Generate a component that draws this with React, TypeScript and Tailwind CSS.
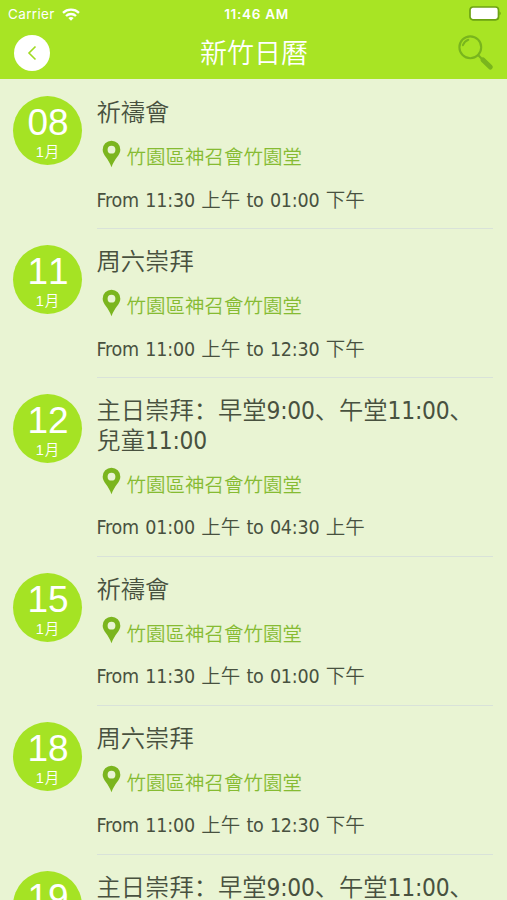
import React from "react"

const __TAILWIND_CSS = {
    cjk: "font-['Noto_Sans_CJK_TC',sans-serif]",
    // full width punctuation sits at the lower left of its box
    punctuation: "font-['Noto_Sans_CJK_SC',sans-serif]",
    latin: "font-['DejaVu_Sans_Condensed','DejaVu_Sans',sans-serif] font-stretch-condensed font-normal tracking-[-0.01em]",
}

interface CalendarEvent {
    day: string
    title: string[]
    from: string
    to: string
}

const EVENTS: CalendarEvent[] = [
    { day: '08', title: ['祈禱會'], from: '11:30 上午', to: '01:00 下午' },
    { day: '11', title: ['周六崇拜'], from: '11:00 上午', to: '12:30 下午' },
    { day: '12', title: ['主日崇拜：早堂9:00、午堂11:00、', '兒童11:00'], from: '01:00 上午', to: '04:30 上午' },
    { day: '15', title: ['祈禱會'], from: '11:30 上午', to: '01:00 下午' },
    { day: '18', title: ['周六崇拜'], from: '11:00 上午', to: '12:30 下午' },
    { day: '19', title: ['主日崇拜：早堂9:00、午堂11:00、', '兒童11:00'], from: '01:00 上午', to: '04:30 上午' },
]

// Latin runs and punctuation use different families from the Chinese ones
const MixedText = ({ text }: { text: string }) => {
    return <>
        {text.split(/([\x20-\x7e]+|[：、])/).map((part, i) => {
            if (i % 2 === 0) return part
            const mode = /[：、]/.test(part) ? __TAILWIND_CSS.punctuation : __TAILWIND_CSS.latin
            return <span key={i} lang={mode === __TAILWIND_CSS.punctuation ? 'zh-Hans' : 'en'} className={mode}>{part}</span>
        })}
    </>
}

const WifiIcon = () => (
    <svg className="ml-[7px] h-[13px] w-[18px]" viewBox="0 0 18 13" fill="none" stroke="white" strokeWidth="2.3">
        <path d="M1 4.8C5.5.6 12.5.6 17 4.8" />
        <path d="M4 8C6.8 5.3 11.2 5.3 14 8" />
        <path d="M9 12.7L6.3 10Q9 7.8 11.7 10Z" fill="white" stroke="none" />
    </svg>
)

const BatteryIcon = () => (
    <svg className="mb-[2px] h-[15px] w-[33px]" viewBox="0 0 33 15">
        <rect x="1" y="1" width="28.5" height="12.8" rx="3" fill="white" stroke="#6ca313" strokeWidth="1.7" />
        <path d="M30.5 5.2Q33 7.4 30.5 9.6Z" fill="#6ca313" />
    </svg>
)

const SearchIcon = () => (
    <svg className="h-9 w-9" viewBox="0 0 36 36" fill="none" stroke="#79b51d" strokeLinecap="round">
        <circle cx="12.3" cy="12.3" r="10.9" strokeWidth="2.1" />
        <path d="M4.9 10.2Q6.5 6.2 10.3 4.8" strokeWidth="2" />
        <path d="M20.3 20.3L24.5 24.5" strokeWidth="2.2" />
        <path d="M25 25L32.3 32" strokeWidth="5" />
    </svg>
)

const PinIcon = () => (
    <svg className="mt-px h-7 w-[19px] shrink-0" viewBox="0 0 20 28">
        <path fillRule="evenodd" fill="#7bb51e" d="M10 0A9.3 9.3 0 0 0 .7 9.4C.7 15.2 7 18.5 10 28C13 18.5 19.3 15.2 19.3 9.4A9.3 9.3 0 0 0 10 0ZM10 5.4A4.1 4.1 0 1 1 10 13.6A4.1 4.1 0 1 1 10 5.4Z" />
    </svg>
)

const Header = () => {
    return (
        <header className="h-[79px] shrink-0 bg-[#a8e424] text-white">
            <div className="grid h-7 grid-cols-[1fr_auto_1fr] items-center pl-2 pr-[5px] font-['Inter',sans-serif]">
                <div className="flex items-center text-[13.5px] tracking-[0.35px]">Carrier<WifiIcon /></div>
                <span className="pl-[3px] text-[13.5px] font-semibold tracking-[0.7px]">11:46 AM</span>
                <div className="flex justify-end"><BatteryIcon /></div>
            </div>
            <div className="grid h-[50px] grid-cols-[1fr_auto_1fr] items-center pl-[14px] pr-[13px]">
                <button className="flex size-[35.5px] items-center justify-center rounded-full bg-white">
                    <svg className="h-4 w-2.5" viewBox="0 0 10 16" fill="none" stroke="#a0da22" strokeWidth="1.6">
                        <path d="M8.5 1.5L2 8L8.5 14.5" />
                    </svg>
                </button>
                <h1 className={`${__TAILWIND_CSS.cjk} pb-[4px] text-[27px] leading-none font-[350]`}>新竹日曆</h1>
                <div className="flex justify-end"><SearchIcon /></div>
            </div>
        </header>
    )
}

const EventRow = ({ event }: { event: CalendarEvent }) => {
    return (
        <li className="flex shrink-0 pl-[13px] pr-[14px]">
            <div className="mt-4 mr-[14.5px] flex size-[69px] shrink-0 flex-col items-center rounded-full bg-[#a5e324] text-white">
                <span className="mt-[7px] pl-px font-['Liberation_Sans',sans-serif] text-[37px] leading-[39px] [font-kerning:none]">{event.day}</span>
                <span className={`${__TAILWIND_CSS.cjk} -mt-px h-5 text-[14.5px] leading-5 font-[350]`}>
                    <span className="mr-px font-['Liberation_Sans',sans-serif]">1</span>月
                </span>
            </div>
            <div className={`${__TAILWIND_CSS.cjk} min-w-0 flex-1 border-b border-[#d9e2d9] font-[350] text-[#48513f]`}>
                <h2 className="mt-4 text-[24.3px] leading-[29.5px] whitespace-nowrap">
                    {event.title.map((line) => <div key={line} className="h-[29.5px]"><MixedText text={line} /></div>)}
                </h2>
                <div className="mt-[13.5px] flex h-7 items-center gap-[6px] pl-[5px] text-[#86bb32]">
                    <PinIcon />
                    <span className="mt-[6px] text-[19.5px] leading-7">竹園區神召會竹園堂</span>
                </div>
                <p className="mt-[17.5px] mb-[15.5px] h-7 text-[19.5px] leading-7 whitespace-nowrap [word-spacing:0.9px]">
                    <MixedText text={`From ${event.from} to ${event.to}`} />
                </p>
            </div>
        </li>
    )
}

const App = () => {
    return (
        <div className="flex h-[900px] w-[507px] flex-col overflow-hidden bg-[#e9f4d3]">
            <Header />
            <ul className="mt-px flex min-h-0 flex-1 flex-col overflow-hidden">
                {EVENTS.map((event) => <EventRow key={event.day} event={event} />)}
            </ul>
        </div>
    )
}

export default App;
